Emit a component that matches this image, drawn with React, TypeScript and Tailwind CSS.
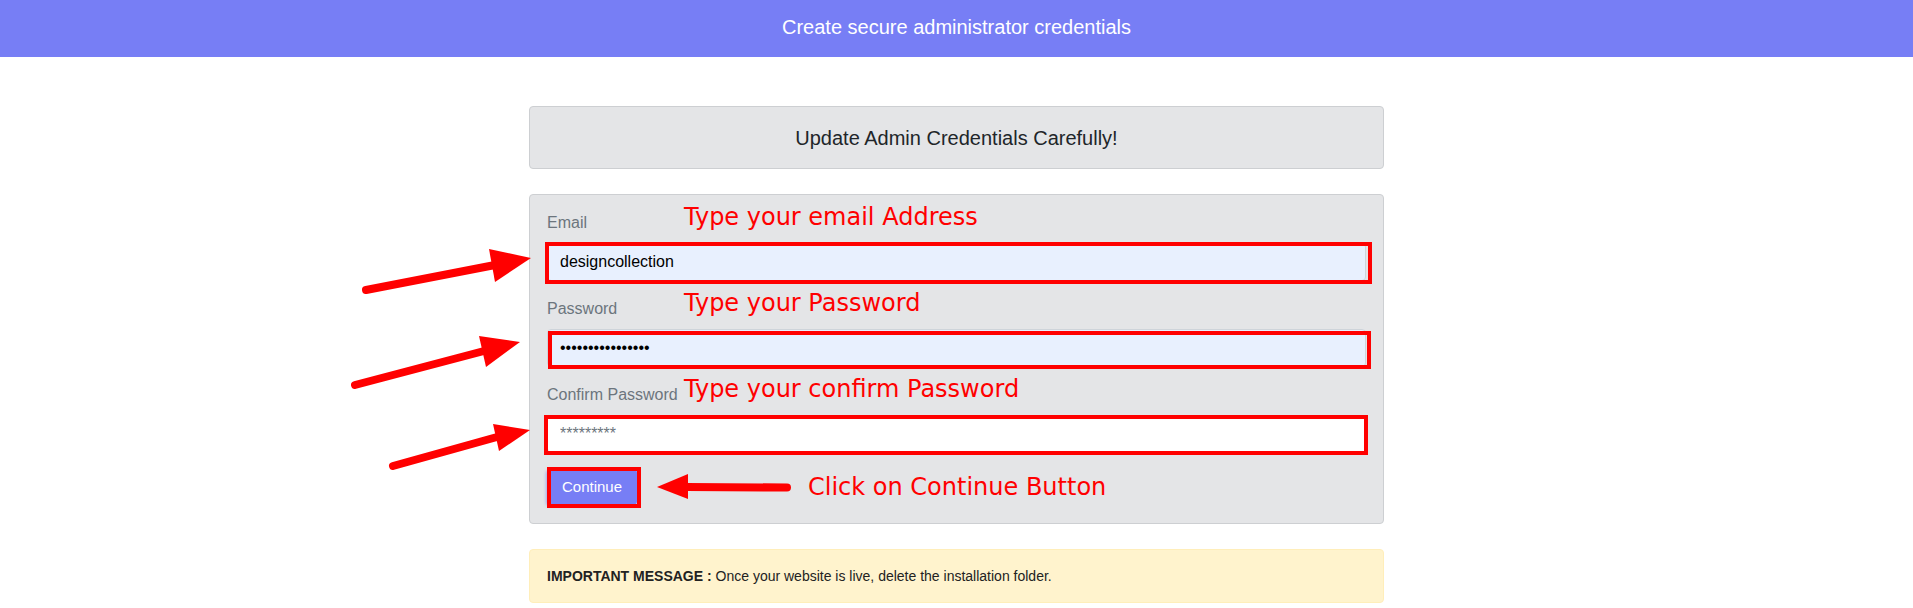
import React from 'react'

const FIELDS = [
  {
    label: 'Email',
    note: 'Type your email Address',
    type: 'text',
    value: 'designcollection',
    placeholder: '',
    bg: 'bg-[#e8f0fe]',
    ring: '-left-[2px] -right-[6px] -top-[1px] -bottom-[3px]',
  },
  {
    label: 'Password',
    note: 'Type your Password',
    type: 'password',
    value: 'designcollection',
    placeholder: '',
    bg: 'bg-[#e8f0fe]',
    ring: 'left-[1px] -right-[5px] top-[2px] -bottom-[2px]',
  },
  {
    label: 'Confirm Password',
    note: 'Type your confirm Password',
    type: 'password',
    value: '',
    placeholder: '*********',
    bg: 'bg-white',
    ring: '-left-[3px] -right-[2px] top-0 -bottom-[2px]',
  },
]

// red call-out arrows on the left of the form (coords relative to the svg box)
function SideArrows() {
  return (
    <svg
      className="absolute top-0 -left-[200px] w-[200px] h-[330px] overflow-visible pointer-events-none"
      viewBox="0 0 200 330"
    >
      <g fill="#ff0000" stroke="#ff0000" strokeLinecap="round">
        <line x1="36" y1="95" x2="165" y2="70" strokeWidth="8" />
        <polygon points="201,63 159,54 165,87" stroke="none" />
        <line x1="25" y1="190" x2="154" y2="156" strokeWidth="8" />
        <polygon points="190,147 149,141 156,172" stroke="none" />
        <line x1="63" y1="271" x2="167" y2="242" strokeWidth="8" />
        <polygon points="200,235 163,229 169,256" stroke="none" />
      </g>
    </svg>
  )
}

export default function App() {
  return (
    <div className="min-h-[608px] bg-white font-['Liberation_Sans',Arial,sans-serif]">
      <header className="h-[57px] pb-[4px] bg-[#777ef5] flex items-center justify-center">
        <h1 className="text-[20px] leading-6 text-white">Create secure administrator credentials</h1>
      </header>

      <main className="w-[855px] mx-auto pt-[49px]">
        <div className="h-[63px] flex items-center justify-center rounded-[4px] border border-[#cdcfd2] bg-[#e4e5e7]">
          <h2 className="text-[20px] leading-6 text-[#212529]">Update Admin Credentials Carefully!</h2>
        </div>

        <form
          className="relative mt-[25px] rounded-[4px] border border-[#cdcfd2] bg-[#e4e5e7] px-[17px] pt-[16px] pb-[18px]"
          onSubmit={(e) => e.preventDefault()}
        >
          <SideArrows />

          {FIELDS.map((f) => (
            <div key={f.label} className="mb-4">
              <div className="relative mb-2 h-6 text-[16px] leading-6 text-[#6c757d]">
                <label>{f.label}</label>
                <span className="absolute left-[137px] -top-[6px] whitespace-nowrap text-[24px] leading-none text-[#ff0000] font-['DejaVu_Sans',sans-serif]">
                  {f.note}
                </span>
              </div>
              <div className="relative">
                <input
                  readOnly
                  type={f.type}
                  defaultValue={f.value}
                  placeholder={f.placeholder}
                  className={`block w-full h-[38px] px-3 text-[16px] text-black border border-[#ced4da] rounded-[4px] outline-none placeholder:text-[#6c757d] ${f.bg}`}
                />
                <div className={`absolute border-[4px] border-[#ff0000] pointer-events-none ${f.ring}`} />
              </div>
            </div>
          ))}

          <div className="flex items-center">
            <div className="relative">
              <button
                type="submit"
                className="h-[36px] w-[90px] rounded-[4px] bg-[#777ef5] text-[15px] text-white shadow-[-1px_1px_3px_rgba(100,110,240,0.5)]"
              >
                Continue
              </button>
              <div className="absolute left-0 -right-[4px] -top-[2px] -bottom-[3px] border-[4px] border-[#ff0000] pointer-events-none" />
            </div>
            <svg className="ml-[20px] w-[134px] h-[26px]" viewBox="0 0 134 26">
              <g fill="#ff0000" stroke="#ff0000" strokeLinecap="round">
                <line x1="30" y1="13" x2="130" y2="13.5" strokeWidth="8" />
                <polygon points="0,13 31,0 31,25" stroke="none" />
              </g>
            </svg>
            <span className="ml-[17px] whitespace-nowrap text-[24px] leading-none text-[#ff0000] font-['DejaVu_Sans',sans-serif]">
              Click on Continue Button
            </span>
          </div>
        </form>

        <div className="mt-[25px] h-[54px] flex items-center rounded-[4px] border border-[#ffeeba] bg-[#fff3cd] px-[17px] text-[14px] text-[#222]">
          <p>
            <strong>IMPORTANT MESSAGE :</strong> Once your website is live, delete the installation folder.
          </p>
        </div>
      </main>
    </div>
  )
}
